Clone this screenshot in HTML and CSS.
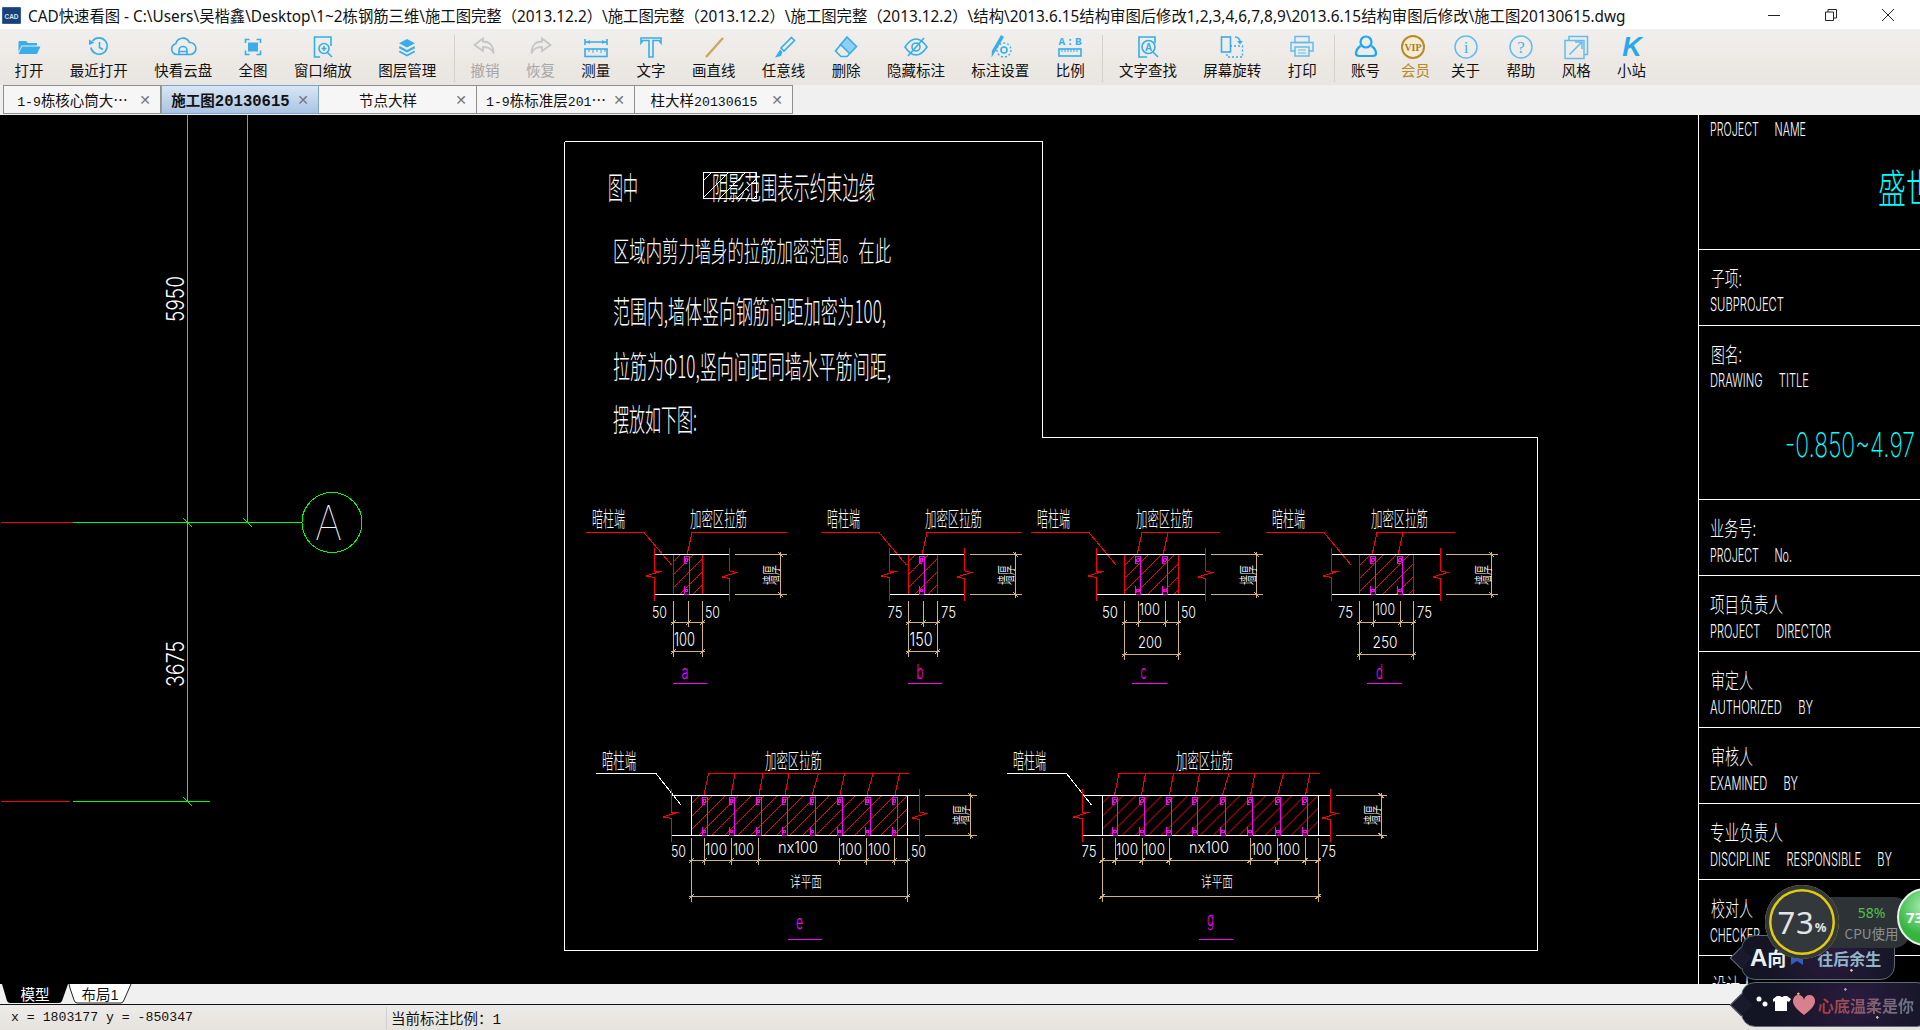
FILE: index.html
```html
<!DOCTYPE html>
<html lang="zh">
<head>
<meta charset="utf-8">
<title>CAD快速看图</title>
<link rel="stylesheet" href="styles.css">
</head>
<body>
<header class="titlebar">
  <svg class="appicon" viewBox="0 0 19 17"><rect width="19" height="17" rx="1" fill="#2b5f9e"/><rect x="1" y="1" width="17" height="15" fill="#1d3f73"/><text x="9.5" y="11.5" class="appicon-text" textLength="14" lengthAdjust="spacingAndGlyphs">CAD</text></svg>
  <span class="title-text">CAD快速看图 - C:\Users\吴楷鑫\Desktop\1~2栋钢筋三维\施工图完整（2013.12.2）\施工图完整（2013.12.2）\施工图完整（2013.12.2）\结构\2013.6.15结构审图后修改1,2,3,4,6,7,8,9\2013.6.15结构审图后修改\施工图20130615.dwg</span>
  <div class="winctl">
    <svg class="win-btn" viewBox="0 0 12 12"><path d="M0 6.5H12"/></svg>
    <svg class="win-btn win-max" viewBox="0 0 12 12"><path d="M0.5 3H8.5V11.5H0.5ZM3 3V0.5H11.5V9H8.5"/></svg>
    <svg class="win-btn win-close" viewBox="0 0 12 12"><path d="M0 0L12 12M12 0L0 12"/></svg>
  </div>
</header>

<nav class="toolbar">
  <div class="tool"><svg class="ico" viewBox="0 0 32 24"><path class="bf" d="M6 6h7l2 2h9v2.5H8.5L5.5 17V7z"/><path class="bf" d="M9 11.5h18.5L24 19H5.5z"/></svg><span>打开</span></div>
  <div class="tool"><svg class="ico" viewBox="0 0 32 24"><path class="bs" d="M9.5 6a8.2 8.2 0 1 1-1.6 6.5"/><path class="bf" d="M6 4.5l5.5 3.2L6 10z"/><path class="bs" d="M16.5 7v5.5l3.5 2"/></svg><span>最近打开</span></div>
  <div class="tool"><svg class="ico" viewBox="0 0 32 24"><path class="bs" d="M10 19.5a5.5 5.5 0 0 1-1.2-10.8a7.2 7.2 0 0 1 13.6-1.2a6 6 0 0 1 1 12z"/><path class="bs" d="M12 19.5v-4a4 4 0 0 1 8 0v4M12 16.5h8"/></svg><span>快看云盘</span></div>
  <div class="tool"><svg class="ico" viewBox="0 0 32 24"><path class="bs" d="M8.5 8V4.500h4M19.500 4.500h4V8M23.500 15.500v4h-4M12.500 19.500h-4v-4"/><rect class="bf" x="11" y="7.500" width="10" height="9"/></svg><span>全图</span></div>
  <div class="tool"><svg class="ico" viewBox="0 0 32 24"><path class="bs" d="M24 11V2H7.500v20H13"/><circle class="bs" cx="17" cy="13.500" r="5"/><path class="bs" d="M20.500 17.500L25 22M17 11v5M14.500 13.500h5"/></svg><span>窗口缩放</span></div>
  <div class="tool"><svg class="ico" viewBox="0 0 32 24"><path class="bf" d="M16 4l8 4.200-8 4.300-8-4.300z"/><path class="bf" d="M8.500 11l7.500 4 7.500-4 .5 2.300-8 4.200-8-4.200z"/><path class="bf" d="M8.500 15.500l7.500 4 7.500-4 .5 1.800-8 4.200-8-4.200z"/></svg><span>图层管理</span></div>
  <div class="tool-sep"></div>
  <div class="tool off"><svg class="ico" viewBox="0 0 32 24"><path class="gs" d="M14 3.500L5.500 10l8.500 6v-4c5 0 8.500 1 10.500 6.500c0-8-4-12-10.500-12z"/></svg><span>撤销</span></div>
  <div class="tool off"><svg class="ico" viewBox="0 0 32 24"><path class="gs" d="M18 3.500L26.500 10 18 16v-4c-5 0-8.500 1-10.500 6.500c0-8 4-12 10.500-12z"/></svg><span>恢复</span></div>
  <div class="tool"><svg class="ico" viewBox="0 0 32 24"><path class="bs" d="M5 4v6M27 4v6M5.500 7h21"/><path class="bf" d="M6 7l4-2v4zM26 7l-4-2v4z"/><rect class="bs" x="5" y="14" width="22" height="7.500"/><path class="bs thin" d="M9 14v3M13 14v4M17 14v3M21 14v4M25 14v3"/></svg><span>测量</span></div>
  <div class="tool"><svg class="ico" viewBox="0 0 32 24"><path class="bs" d="M6 3h20v5l-2-2.500h-6V22h-4V5.500H8L6 8z"/></svg><span>文字</span></div>
  <div class="tool wide"><svg class="ico" viewBox="0 0 32 24"><path class="gold" d="M8 22L25 3"/></svg><span>画直线</span></div>
  <div class="tool wide"><svg class="ico" viewBox="0 0 32 24"><path class="bs" d="M23.500 2.500l3 3L16 16l-3-3z"/><path class="bf" d="M12 14.500l2.500 2.500-1.500 4-6 1.500 2.500-4z"/></svg><span>任意线</span></div>
  <div class="tool"><svg class="ico" viewBox="0 0 32 24"><path class="lf" d="M17 2l9.500 9.500-7 7-9.500-9.500z"/><path class="bs" d="M17 2l9.500 9.500-9.500 10H11L5.500 16z"/><path class="bs" d="M10 9l9.500 9.500"/></svg><span>删除</span></div>
  <div class="tool"><svg class="ico" viewBox="0 0 32 24"><path class="bs" d="M5 12c4-6 7.500-8 11-8s7 2 11 8c-4 6-7.500 8-11 8s-7-2-11-8z"/><circle class="bs" cx="16" cy="12" r="4"/><path class="bs" d="M24 3L8 21"/></svg><span>隐藏标注</span></div>
  <div class="tool"><svg class="ico" viewBox="0 0 32 24"><path class="bf" d="M17 0l3 2-9 15-3.500 5.500.5-7z"/><circle class="bs" cx="20" cy="15" r="3"/><circle class="bs dash" cx="20" cy="15" r="7"/></svg><span>标注设置</span></div>
  <div class="tool"><svg class="ico" viewBox="0 0 32 24"><text x="16" y="10" class="ab" textLength="23" lengthAdjust="spacing">A:B</text><rect class="bs" x="5" y="14" width="22" height="7"/><path class="bs thin" d="M8 14v3M11 14v3M14 14v3M17 14v3M20 14v3M23 14v3"/></svg><span>比例</span></div>
  <div class="tool-sep"></div>
  <div class="tool"><svg class="ico" viewBox="0 0 32 24"><path class="bs" d="M23 8V2H7v20h8"/><circle class="bs" cx="16.500" cy="12" r="6.500"/><text x="16.500" y="15.500" class="ia">A</text><path class="bs" d="M21 17l5 5"/></svg><span>文字查找</span></div>
  <div class="tool"><svg class="ico" viewBox="0 0 32 24"><rect class="bs" x="5.500" y="2" width="9" height="15"/><path class="bs dash" d="M14 11h12.500v11H11v-5"/><path class="bs" d="M19 2c3 0 5 2 5.500 6"/><path class="bf" d="M21 6h6l-3 3.500z"/></svg><span>屏幕旋转</span></div>
  <div class="tool"><svg class="ico" viewBox="0 0 32 24"><rect class="ls" x="9" y="1.500" width="14" height="6"/><path class="ls" d="M9 16H5V7.500h22V16h-4"/><rect class="ls" x="9" y="12" width="14" height="9"/><path class="ls thin" d="M12 15h8M12 18h8"/></svg><span>打印</span></div>
  <div class="tool-sep"></div>
  <div class="tool tight"><svg class="ico" viewBox="0 0 32 24"><circle class="bs strong" cx="16" cy="7" r="5.500"/><path class="bs strong" d="M10.500 11c-3 2-4.500 5-4.500 7.500c0 2 2 2.500 3.500 2.500h13c1.500 0 3.500-.5 3.500-2.500C26 16 24.500 13 21.500 11"/></svg><span>账号</span></div>
  <div class="tool tight vip"><svg class="ico" viewBox="0 0 32 24"><circle cx="13" cy="12" r="11" class="vip-ring"/><text x="13" y="15.500" class="vip-text" textLength="17" lengthAdjust="spacingAndGlyphs">VIP</text></svg><span>会员</span></div>
  <div class="tool"><svg class="ico" viewBox="0 0 32 24"><circle cx="16" cy="12" r="11" class="ls"/><text x="16" y="18" class="ci">i</text></svg><span>关于</span></div>
  <div class="tool"><svg class="ico" viewBox="0 0 32 24"><circle cx="16" cy="12" r="11" class="ls"/><text x="16" y="18" class="ci">?</text></svg><span>帮助</span></div>
  <div class="tool"><svg class="ico" viewBox="0 0 32 24"><path class="ls" d="M9 5.500V1.500h18.500v18H24"/><rect class="ls" x="5" y="5.500" width="19" height="18"/><path class="ls" d="M9.500 19.500L22 7M15 7h7v7"/></svg><span>风格</span></div>
  <div class="tool"><svg class="ico" viewBox="0 0 32 24"><text x="16" y="21" class="kk">K</text></svg><span>小站</span></div>
</nav>

<div class="tabs">
  <div class="tab"><span class="tab-label"><span class="num">1-9</span>栋核心筒大…</span><span class="tab-x">✕</span></div>
  <div class="tab active"><span class="tab-label">施工图<span class="num">20130615</span></span><span class="tab-x">✕</span></div>
  <div class="tab"><span class="tab-label">节点大样</span><span class="tab-x">✕</span></div>
  <div class="tab"><span class="tab-label"><span class="num">1-9</span>栋标准层<span class="num">201</span>…</span><span class="tab-x">✕</span></div>
  <div class="tab"><span class="tab-label">柱大样<span class="num">20130615</span></span><span class="tab-x">✕</span></div>
</div>

<main class="canvas">
<svg class="drawing" viewBox="0 115 1920 869" width="1920" height="869" xmlns="http://www.w3.org/2000/svg">
  <defs>
    <pattern id="hatch" patternUnits="userSpaceOnUse" width="13" height="13"><path d="M-1 14L14 -1" class="r"/></pattern>
    <pattern id="whatch" patternUnits="userSpaceOnUse" width="17" height="17"><path d="M-1 18L18 -1" class="w"/></pattern>
    <g id="st" class="m">
      <path d="M5.500 0V38M0.500 0H5.500M0.500 0V7H3M0.500 38H5.500M0.500 30V38"/>
      <circle cx="3" cy="4" r="1.500"/><circle cx="3" cy="34.500" r="1.500"/>
    </g>
    <g id="brkL" class="r"><path d="M0.500 -6V17H8L-8 22L0.500 23.500V47"/></g>
    <g id="brkR" class="r"><path d="M0.500 -6V17L7.500 18.500L-7 23L0.500 24.500V47"/></g>
    <g id="dimR" class="t">
      <path d="M0 0H51.500M0 40H51.500M45.500 -3V43M43 -2.500L48 2.500M43 37.500L48 42.500"/>
    </g>
    <g id="d1">
      <path class="r" d="M586 532.500H644L671.500 565M787 532.500H692L687 555"/>
      <rect x="673.500" y="554.500" width="29" height="40" fill="url(#hatch)"/>
      <path class="r" d="M673.500 554V594M702.500 554V594"/>
      <path class="w" d="M654 554.500H729M654 594.500H729"/>
      <use href="#brkL" x="654" y="554"/><use href="#brkR" x="729" y="554"/>
      <use href="#st" x="683.500" y="556"/>
      <use href="#dimR" x="735" y="554.500"/>
      <path class="t" d="M673.500 601V657M688.500 601V627M702.500 601V657M671 622.500H705M671 651.500H705M671 625L676 620M686 625L691 620M700 625L705 620M671 654L676 649M700 654L705 649"/>
    </g>
    <g id="d2">
      <path class="r" d="M1031 532.500H1089L1116 565M1220 532.500H1142L1137 555M1168 532.500L1163 555"/>
      <rect x="1124.500" y="554.500" width="54" height="40" fill="url(#hatch)"/>
      <path class="r" d="M1124.500 554V594M1178.500 554V594"/>
      <path class="w" d="M1096 554.500H1205M1096 594.500H1205"/>
      <use href="#brkL" x="1096" y="554"/><use href="#brkR" x="1205" y="554"/>
      <use href="#st" x="1135" y="556"/><use href="#st" x="1162" y="556"/>
      <use href="#dimR" x="1211" y="554.500"/>
      <path class="t" d="M1124.500 601V660M1138.500 601V627M1165.500 601V627M1178.500 601V660M1122 622.500H1181M1122 654.500H1181M1122 625L1127 620M1136 625L1141 620M1163 625L1168 620M1176 625L1181 620M1122 657L1127 652M1176 657L1181 652"/>
    </g>
    <g id="d3">
      <path class="w" d="M596 773.500H656L681 805"/>
      <path class="r" d="M909 773.500H708.500L704 795M735 773.500L731 795M763 773.500L759 795M789 773.500L785 795M818.500 773.500L812 795M844.500 773.500L840 795M873 773.500L867 795M899.500 773.500L895 795"/>
      <rect x="691.500" y="795.500" width="216" height="40" fill="url(#hatch)"/>
      <path class="w" d="M691.500 795V835M907.500 795V835M671 795.500H920M671 835.500H920"/>
      <use href="#brkL" x="671" y="795"/><use href="#brkR" x="919" y="795"/>
      <use href="#st" x="701.500" y="797"/><use href="#st" x="728.500" y="797"/><use href="#st" x="755.500" y="797"/><use href="#st" x="781.500" y="797"/><use href="#st" x="809.500" y="797"/><use href="#st" x="836.500" y="797"/><use href="#st" x="864.500" y="797"/><use href="#st" x="891.500" y="797"/>
      <use href="#dimR" x="925" y="795.500"/>
      <path class="t" d="M691.500 838V902M704.500 838V865M731.500 838V865M758.500 838V865M839.500 838V865M866.500 838V865M894.500 838V865M907.500 838V902M689 860.500H910M689 896.500H910M689 863L694 858M702 863L707 858M729 863L734 858M756 863L761 858M837 863L842 858M864 863L869 858M892 863L897 858M905 863L910 858M689 899L694 894M905 899L910 894"/>
    </g>
  </defs>

  <!-- axis grid -->
  <g class="g">
    <path d="M187.500 115V801M247.500 115V522M73 522.500H302M73 801.500H210M183 518L192 527M243 518L252 527M183 797L192 806"/>
    <circle cx="332" cy="522.500" r="30"/>
  </g>
  <path class="r" d="M1 522.500H73M1 801.500H70"/>
  <text class="cad-thin" x="315" y="540" textLength="27" lengthAdjust="spacingAndGlyphs" font-size="48">A</text>
  <text class="la" transform="translate(184,322) rotate(-90)" font-size="23.500" textLength="46" lengthAdjust="spacingAndGlyphs">5950</text>
  <text class="la" transform="translate(184,687) rotate(-90)" font-size="23.500" textLength="46" lengthAdjust="spacingAndGlyphs">3675</text>

  <!-- sheet frame -->
  <path class="w" d="M565 141.500H1042.500V437.500H1537.500V950.500H564.500V141.500"/>

  <!-- note -->
  <rect x="703.500" y="172.500" width="53" height="26" fill="url(#whatch)"/>
  <rect x="703.500" y="172.500" width="53" height="26" class="w"/>
  <text class="cn" x="608" y="199" font-size="31" textLength="30" lengthAdjust="spacingAndGlyphs">图中</text>
  <text class="cn" x="712" y="199" font-size="31" textLength="163" lengthAdjust="spacingAndGlyphs">阴影范围表示约束边缘</text>
  <text class="cn" x="613" y="262" font-size="28" textLength="278" lengthAdjust="spacingAndGlyphs">区域内剪力墙身的拉筋加密范围。在此</text>
  <text class="cn" x="613" y="323" font-size="31" textLength="273" lengthAdjust="spacingAndGlyphs">范围内,墙体竖向钢筋间距加密为100,</text>
  <text class="cn" x="613" y="378" font-size="31" textLength="278" lengthAdjust="spacingAndGlyphs">拉筋为Φ10,竖向间距同墙水平筋间距,</text>
  <text class="cn" x="613" y="431" font-size="31" textLength="84" lengthAdjust="spacingAndGlyphs">摆放如下图:</text>

  <!-- details -->
  <use href="#d1"/><use href="#d1" x="235"/><use href="#d2"/><use href="#d2" x="235"/><use href="#d3"/><use href="#d3" x="410.500"/>

  <text class="cn" x="592" y="526" font-size="21" textLength="33" lengthAdjust="spacingAndGlyphs">暗柱端</text>
  <text class="cn" x="690" y="526" font-size="21" textLength="57" lengthAdjust="spacingAndGlyphs">加密区拉筋</text>
  <text class="cn" transform="translate(778,585) rotate(-90)" font-size="18.500" textLength="20" lengthAdjust="spacingAndGlyphs">墙厚</text>
  <text class="la" x="652" y="617.500" font-size="15.500" textLength="15" lengthAdjust="spacingAndGlyphs">50</text>
  <text class="la" x="705" y="617.500" font-size="15.500" textLength="15" lengthAdjust="spacingAndGlyphs">50</text>
  <text class="la" x="674" y="646" font-size="18" textLength="21" lengthAdjust="spacingAndGlyphs">100</text>
  <text class="lm" x="681.500" y="679" font-size="20" textLength="7" lengthAdjust="spacingAndGlyphs">a</text>
  <path class="m" d="M673 683.500H707"/>

  <text class="cn" x="827" y="526" font-size="21" textLength="33" lengthAdjust="spacingAndGlyphs">暗柱端</text>
  <text class="cn" x="925" y="526" font-size="21" textLength="57" lengthAdjust="spacingAndGlyphs">加密区拉筋</text>
  <text class="cn" transform="translate(1013,585) rotate(-90)" font-size="18.500" textLength="20" lengthAdjust="spacingAndGlyphs">墙厚</text>
  <text class="la" x="887.500" y="617.500" font-size="15.500" textLength="15" lengthAdjust="spacingAndGlyphs">75</text>
  <text class="la" x="941" y="617.500" font-size="15.500" textLength="15" lengthAdjust="spacingAndGlyphs">75</text>
  <text class="la" x="909.500" y="646" font-size="18" textLength="23" lengthAdjust="spacingAndGlyphs">150</text>
  <text class="lm" x="916.500" y="679" font-size="20" textLength="7" lengthAdjust="spacingAndGlyphs">b</text>
  <path class="m" d="M908 683.500H942"/>

  <text class="cn" x="1037" y="526" font-size="21" textLength="33" lengthAdjust="spacingAndGlyphs">暗柱端</text>
  <text class="cn" x="1136" y="526" font-size="21" textLength="57" lengthAdjust="spacingAndGlyphs">加密区拉筋</text>
  <text class="cn" transform="translate(1255,585) rotate(-90)" font-size="18.500" textLength="20" lengthAdjust="spacingAndGlyphs">墙厚</text>
  <text class="la" x="1102" y="617.500" font-size="15.500" textLength="16" lengthAdjust="spacingAndGlyphs">50</text>
  <text class="la" x="1139" y="615" font-size="15.500" textLength="21" lengthAdjust="spacingAndGlyphs">100</text>
  <text class="la" x="1181" y="617.500" font-size="15.500" textLength="15" lengthAdjust="spacingAndGlyphs">50</text>
  <text class="la" x="1138" y="648" font-size="15.500" textLength="24" lengthAdjust="spacingAndGlyphs">200</text>
  <text class="lm" x="1140.500" y="679" font-size="20" textLength="6" lengthAdjust="spacingAndGlyphs">c</text>
  <path class="m" d="M1132 683.500H1167"/>

  <text class="cn" x="1272" y="526" font-size="21" textLength="33" lengthAdjust="spacingAndGlyphs">暗柱端</text>
  <text class="cn" x="1371" y="526" font-size="21" textLength="57" lengthAdjust="spacingAndGlyphs">加密区拉筋</text>
  <text class="cn" transform="translate(1490,585) rotate(-90)" font-size="18.500" textLength="20" lengthAdjust="spacingAndGlyphs">墙厚</text>
  <text class="la" x="1338" y="617.500" font-size="15.500" textLength="15" lengthAdjust="spacingAndGlyphs">75</text>
  <text class="la" x="1375" y="615" font-size="15.500" textLength="20" lengthAdjust="spacingAndGlyphs">100</text>
  <text class="la" x="1417" y="617.500" font-size="15.500" textLength="15" lengthAdjust="spacingAndGlyphs">75</text>
  <text class="la" x="1372.500" y="648" font-size="15.500" textLength="25" lengthAdjust="spacingAndGlyphs">250</text>
  <text class="lm" x="1376" y="679" font-size="20" textLength="7" lengthAdjust="spacingAndGlyphs">d</text>
  <path class="m" d="M1367 683.500H1402"/>

  <text class="cn" x="602" y="768" font-size="21" textLength="34" lengthAdjust="spacingAndGlyphs">暗柱端</text>
  <text class="cn" x="765" y="768" font-size="21" textLength="57" lengthAdjust="spacingAndGlyphs">加密区拉筋</text>
  <text class="cn" transform="translate(968,825) rotate(-90)" font-size="18.500" textLength="20" lengthAdjust="spacingAndGlyphs">墙厚</text>
  <text class="la" x="671" y="857" font-size="15.500" textLength="15" lengthAdjust="spacingAndGlyphs">50</text>
  <text class="la" x="705" y="855" font-size="16.500" textLength="22" lengthAdjust="spacingAndGlyphs">100</text>
  <text class="la" x="733" y="855" font-size="16.500" textLength="21" lengthAdjust="spacingAndGlyphs">100</text>
  <text class="la" x="778" y="853" font-size="16.500" textLength="40" lengthAdjust="spacingAndGlyphs">nx100</text>
  <text class="la" x="840" y="855" font-size="16.500" textLength="22" lengthAdjust="spacingAndGlyphs">100</text>
  <text class="la" x="868" y="855" font-size="16.500" textLength="22" lengthAdjust="spacingAndGlyphs">100</text>
  <text class="la" x="911" y="857" font-size="15.500" textLength="15" lengthAdjust="spacingAndGlyphs">50</text>
  <text class="cn" x="790" y="887" font-size="15" textLength="32" lengthAdjust="spacingAndGlyphs">详平面</text>
  <text class="lm" x="796" y="929" font-size="20" textLength="7" lengthAdjust="spacingAndGlyphs">e</text>
  <path class="m" d="M788 939.500H822"/>

  <text class="cn" x="1013" y="768" font-size="21" textLength="33" lengthAdjust="spacingAndGlyphs">暗柱端</text>
  <text class="cn" x="1176" y="768" font-size="21" textLength="57" lengthAdjust="spacingAndGlyphs">加密区拉筋</text>
  <text class="cn" transform="translate(1379,825) rotate(-90)" font-size="18.500" textLength="20" lengthAdjust="spacingAndGlyphs">墙厚</text>
  <text class="la" x="1081.500" y="857" font-size="15.500" textLength="15" lengthAdjust="spacingAndGlyphs">75</text>
  <text class="la" x="1116" y="855" font-size="16.500" textLength="22" lengthAdjust="spacingAndGlyphs">100</text>
  <text class="la" x="1143" y="855" font-size="16.500" textLength="22" lengthAdjust="spacingAndGlyphs">100</text>
  <text class="la" x="1189" y="853" font-size="16.500" textLength="40" lengthAdjust="spacingAndGlyphs">nx100</text>
  <text class="la" x="1251" y="855" font-size="16.500" textLength="21" lengthAdjust="spacingAndGlyphs">100</text>
  <text class="la" x="1278" y="855" font-size="16.500" textLength="22" lengthAdjust="spacingAndGlyphs">100</text>
  <text class="la" x="1321" y="857" font-size="15.500" textLength="15" lengthAdjust="spacingAndGlyphs">75</text>
  <text class="cn" x="1201" y="887" font-size="15" textLength="32" lengthAdjust="spacingAndGlyphs">详平面</text>
  <text class="lm" x="1207" y="926" font-size="20" textLength="7" lengthAdjust="spacingAndGlyphs">g</text>
  <path class="m" d="M1199 939.500H1233"/>

  <!-- title block -->
  <path class="w" d="M1698.500 115V984M1699 249.500H1920M1699 325.500H1920M1699 499.500H1920M1699 575.500H1920M1699 651.500H1920M1699 727.500H1920M1699 803.500H1920M1699 879.500H1920M1699 955.500H1920"/>
  <text class="la wide-gap" x="1710" y="136" font-size="18" textLength="96" lengthAdjust="spacingAndGlyphs">PROJECT  NAME</text>
  <text class="cnc" x="1878" y="203" font-size="40" textLength="56" lengthAdjust="spacingAndGlyphs">盛世</text>
  <text class="cn" x="1711" y="286" font-size="21" textLength="31" lengthAdjust="spacingAndGlyphs">子项:</text>
  <text class="la" x="1710" y="311" font-size="18" textLength="74" lengthAdjust="spacingAndGlyphs">SUBPROJECT</text>
  <text class="cn" x="1711" y="362" font-size="21" textLength="31" lengthAdjust="spacingAndGlyphs">图名:</text>
  <text class="la wide-gap" x="1710" y="387" font-size="18" textLength="99" lengthAdjust="spacingAndGlyphs">DRAWING  TITLE</text>
  <text class="lc" x="1785" y="457" font-size="34" textLength="130" lengthAdjust="spacingAndGlyphs">-0.850~4.97</text>
  <text class="cn" x="1710" y="536" font-size="21" textLength="46" lengthAdjust="spacingAndGlyphs">业务号:</text>
  <text class="la wide-gap" x="1710" y="562" font-size="18" textLength="82" lengthAdjust="spacingAndGlyphs">PROJECT  No.</text>
  <text class="cn" x="1710" y="612" font-size="21" textLength="73" lengthAdjust="spacingAndGlyphs">项目负责人</text>
  <text class="la wide-gap" x="1710" y="638" font-size="18" textLength="121" lengthAdjust="spacingAndGlyphs">PROJECT  DIRECTOR</text>
  <text class="cn" x="1711" y="688" font-size="21" textLength="42" lengthAdjust="spacingAndGlyphs">审定人</text>
  <text class="la wide-gap" x="1710" y="714" font-size="18" textLength="103" lengthAdjust="spacingAndGlyphs">AUTHORIZED  BY</text>
  <text class="cn" x="1711" y="764" font-size="21" textLength="42" lengthAdjust="spacingAndGlyphs">审核人</text>
  <text class="la wide-gap" x="1710" y="790" font-size="18" textLength="88" lengthAdjust="spacingAndGlyphs">EXAMINED  BY</text>
  <text class="cn" x="1710" y="840" font-size="21" textLength="73" lengthAdjust="spacingAndGlyphs">专业负责人</text>
  <text class="la wide-gap" x="1710" y="866" font-size="18" textLength="182" lengthAdjust="spacingAndGlyphs">DISCIPLINE  RESPONSIBLE  BY</text>
  <text class="cn" x="1711" y="916" font-size="21" textLength="42" lengthAdjust="spacingAndGlyphs">校对人</text>
  <text class="la" x="1710" y="942" font-size="18" textLength="50" lengthAdjust="spacingAndGlyphs">CHECKER</text>
  <text class="cn" x="1712" y="993" font-size="21" textLength="42" lengthAdjust="spacingAndGlyphs">设计人</text>
</svg>
</main>

<div class="layouts">
  <div class="ltab ltab-dark"><svg class="ltab-bg" viewBox="0 0 66 20"><path d="M0 0L5 17Q6 19 8 19H57Q59 19 60 17L66 0z"/></svg><span>模型</span></div>
  <div class="ltab ltab-light"><svg class="ltab-bg" viewBox="0 0 66 20"><path d="M2 0Q2 0 3 4L7 16Q8 19 10 19H54Q56 19 57 16L64 0"/></svg><span>布局<span class="ltab-num">1</span></span></div>
</div>

<footer class="status">
  <div class="coord">x = 1803177 y = -850347</div>
  <div class="scale">当前标注比例：<span class="status-num">1</span></div>
</footer>

<aside class="chip chip-top">
  <span class="chip-a">A</span><span class="chip-a2">向</span>
  <svg class="chip-flag" viewBox="0 0 12 14"><path d="M0 0H12V14L6 10L0 14z"/></svg>
  <span class="chip-name">往后余生</span>
</aside>
<aside class="chip chip-bottom">
  <svg class="chip-deco" viewBox="0 0 62 24"><circle cx="5" cy="6" r="2.500"/><circle cx="11" cy="11" r="2.500"/><path d="M19 6l4-3h3q2 2 4 0h3l4 3-2 3-2-1v10H21V8l-2 1z"/><path class="chip-heart" d="M50 22C42 16 39 12 39 8a5.500 5.500 0 0 1 11-1a5.500 5.500 0 0 1 11 1c0 4-3 8-11 14z"/></svg>
  <span class="chip-love">心底温柔是你</span>
</aside>
<aside class="cpu">
  <div class="cpu-pill"><span class="cpu-pct">58%</span><span class="cpu-lbl">CPU使用</span></div>
  <div class="cpu-dial"><span class="cpu-val">73</span><span class="cpu-unit">%</span></div>
  <div class="cpu-ball">73</div>
</aside>
</body>
</html>
```
FILE: styles.css
```css
* { box-sizing: border-box; }
html, body { margin: 0; padding: 0; }
body {
  position: relative;
  width: 1920px;
  height: 1030px;
  overflow: hidden;
  display: flex;
  flex-direction: column;
  background: #f0f0f0;
  font-family: "Noto Sans CJK SC", sans-serif;
  color: #111;
}

/* title bar */
.titlebar {
  flex: 0 0 29px;
  display: flex;
  align-items: center;
  background: #fff;
  padding-left: 2px;
}
.appicon { width: 19px; height: 17px; margin-right: 7px; margin-top: 2px; }
.appicon-text { font: bold 7px "Liberation Sans", sans-serif; fill: #cfe2f5; text-anchor: middle; }
.title-text {
  font-family: "Noto Sans", "Noto Sans CJK SC", sans-serif;
  font-size: 15.35px;
  white-space: nowrap;
  flex: 1;
  color: #111;
}
.winctl { display: flex; align-items: center; padding-right: 26px; gap: 45px; }
.win-btn { width: 12px; height: 12px; fill: none; stroke: #222; stroke-width: 1; }

/* tool bar */
.toolbar {
  flex: 0 0 56px;
  display: flex;
  align-items: flex-start;
  padding-left: 14.5px;
  padding-top: 6px;
  background: linear-gradient(#f1efed, #e9e5e0);
}
.tool {
  display: flex;
  flex-direction: column;
  align-items: center;
  margin-right: 26.35px;
  font-size: 14.5px;
  line-height: 21px;
  white-space: nowrap;
  color: #111;
}
.tool.off { color: #a6a6a6; }
.tool.tight { margin-right: 21px; }
.tool.vip { color: #b98a2a; }
.tool-sep {
  width: 1px;
  height: 47px;
  margin: 0 16px 0 -9px;
  background: #d4d1cd;
}
.ico { width: 32px; height: 24px; margin: 0 -2px; display: block; overflow: visible; }
.bs { fill: none; stroke: #35aeea; stroke-width: 1.6; }
.bs.thin, .ls.thin { stroke-width: 1; }
.bs.strong { stroke-width: 2.2; stroke: #1ea7f0; }
.bs.dash { stroke-dasharray: 2 2; stroke-width: 1.3; }
.bf { fill: #3aaeea; }
.lf { fill: #8ed0f2; }
.ls { fill: none; stroke: #62bdec; stroke-width: 1.5; }
.gs { fill: none; stroke: #c6c6c6; stroke-width: 1.8; }
.gold { fill: none; stroke: #c9a95c; stroke-width: 2.4; }
.ab { font: bold 11px "Liberation Mono", monospace; fill: #35aeea; text-anchor: middle; }
.ia { font: bold 10px "Liberation Sans", sans-serif; fill: #35aeea; text-anchor: middle; }
.ci { font: 17px "Liberation Serif", serif; fill: #4ab3e8; text-anchor: middle; }
.kk { font: italic bold 27px "Liberation Sans", sans-serif; fill: #27a9ec; text-anchor: middle; }
.vip-ring { fill: #f6ecd4; stroke: #b98a2a; stroke-width: 2; }
.vip-text { font: bold 10px "Liberation Serif", serif; fill: #a87a1e; text-anchor: middle; }

/* document tabs */
.tabs {
  flex: 0 0 30px;
  display: flex;
  padding-left: 3px;
  background: #f0f0f0;
}
.tab {
  width: 158px;
  height: 29px;
  display: flex;
  align-items: center;
  padding-left: 3px;
  padding-right: 8px;
  background: #f6f6f6;
  border: 1px solid #8f8f8f;
  border-left-width: 0;
  font-size: 14.5px;
  white-space: nowrap;
}
.tab:first-child { border-left-width: 1px; }
.tab-label { flex: 1; text-align: center; overflow: hidden; }
.tab-x { width: 14px; text-align: center; font-size: 14px; color: #777; font-family: "DejaVu Sans", sans-serif; font-weight: 400; }
.num { font-family: "Liberation Mono", monospace; font-size: 13.2px; }
.tab.active {
  background: linear-gradient(#d9e6f4, #a9c4e2);
  border: 1px solid #7da2cc;
  font-weight: 700;
}
.tab.active .num { font-size: 15.6px; font-weight: 700; }

/* drawing */
.canvas { flex: 1 1 auto; min-height: 0; background: #000; overflow: hidden; }
.drawing { display: block; shape-rendering: crispEdges; }
.w { fill: none; stroke: #fff; stroke-width: 1; }
.r { fill: none; stroke: #f00; stroke-width: 1; }
.g { fill: none; stroke: #0f0; stroke-width: 1; }
.m { fill: none; stroke: #f0f; stroke-width: 1; }
.t { fill: none; stroke: #d2b473; stroke-width: 1; }
.cn, .cnc { font-family: "Noto Sans CJK SC", sans-serif; font-weight: 300; fill: #fff; white-space: pre; }
.cnc { fill: #0ff; }
.la, .lc, .lm { font-family: "Inter", sans-serif; font-weight: 300; fill: #fff; white-space: pre; }
.wide-gap { word-spacing: 8px; }
.lc { fill: #0ff; font-weight: 200; }
.lm { fill: #f0f; }
.cad-thin { font-family: "Inter", sans-serif; font-weight: 100; fill: #fff; }

/* model / layout tabs */
.layouts {
  flex: 0 0 21px;
  display: flex;
  padding-left: 2px;
  background: #f0f0f0;
  border-bottom: 1px solid #111;
  font-size: 14.5px;
}
.ltab {
  position: relative;
  width: 66px;
  height: 20px;
  display: flex;
  justify-content: center;
  align-items: center;
  line-height: 20px;
}
.ltab span { position: relative; }
.ltab-bg { position: absolute; inset: 0; width: 66px; height: 20px; }
.ltab-dark { color: #fff; }
.ltab-dark .ltab-bg { fill: #000; }
.ltab-light { margin-left: -1px; color: #111; }
.ltab-light .ltab-bg { fill: #fff; stroke: #222; stroke-width: 1; }
.ltab-num { font-family: "Liberation Sans", sans-serif; }

/* status bar */
.status {
  flex: 0 0 25px;
  display: flex;
  align-items: center;
  background: linear-gradient(#edebe8, #e6e3de);
  font-size: 14.5px;
}
.coord {
  width: 386px;
  padding-left: 11px;
  font-family: "Liberation Mono", monospace;
  font-size: 13.2px;
  white-space: pre;
}
.scale { border-left: 1px solid #cfcfcf; padding-left: 4px; height: 22px; line-height: 22px; }
.status-num { font-family: "Liberation Mono", monospace; }

/* floating widgets */
.chip {
  position: absolute;
  display: flex;
  align-items: center;
  border: 1px solid #5c6b72;
  border-radius: 14px;
  background:
    radial-gradient(circle at 30% 25%, #c9b56a 0 1px, transparent 1.500px),
    radial-gradient(circle at 72% 80%, #d8c878 0 1px, transparent 1.500px),
    radial-gradient(circle at 55% 15%, #a0a0c0 0 1px, transparent 1.500px),
    radial-gradient(circle at 60% 40%, #2a1b40, #141524 70%);
}
.chip::before {
  content: "";
  position: absolute;
  left: -9px;
  top: 50%;
  width: 15px;
  height: 15px;
  margin-top: -8px;
  transform: rotate(45deg);
  background: #1b1a2c;
  border-left: 1px solid #5c6b72;
  border-bottom: 1px solid #5c6b72;
}
.chip > * { position: relative; }
.chip-top { left: 1741px; top: 935px; width: 154px; height: 45px; padding-left: 8px; }
.chip-a { font: bold 24px "Liberation Sans", sans-serif; color: #eceff3; }
.chip-a2 { font-size: 19px; font-weight: 700; color: #eceff3; margin-right: 5px; }
.chip-flag { width: 12px; height: 14px; fill: #2f5fc4; margin-right: 14px; }
.chip-name { font-size: 16px; font-weight: 700; color: #8fb7c6; white-space: nowrap; }
.chip-bottom { left: 1741px; top: 982px; width: 190px; height: 45px; padding-left: 12px; }
.chip-deco { width: 62px; height: 24px; fill: #fff; flex: none; margin-right: 2px; }
.chip-heart { fill: #d9808c; }
.chip-love {
  font-size: 16px;
  font-weight: 700;
  white-space: nowrap;
  color: transparent;
  background: linear-gradient(90deg, #b03a3a, #8a5a66 45%, #66788a);
  -webkit-background-clip: text;
  background-clip: text;
}
.cpu { position: absolute; left: 1765px; top: 885px; width: 190px; height: 75px; }
.cpu-pill {
  position: absolute;
  left: 35px;
  top: 12px;
  width: 110px;
  height: 51px;
  padding-left: 33px;
  display: flex;
  flex-direction: column;
  align-items: center;
  border-radius: 16px;
  background: #2d3237;
  line-height: 20px;
}
.cpu-pct { font: 14px "Noto Sans", sans-serif; color: #52c04c; margin-top: 6px; }
.cpu-lbl { font-size: 13.5px; color: #8b8f92; white-space: nowrap; margin-top: 1px; }
.cpu-dial {
  position: absolute;
  left: 0;
  top: 0;
  width: 74px;
  height: 74px;
  display: flex;
  align-items: center;
  justify-content: center;
  border-radius: 50%;
  background: #33383d;
  box-shadow: inset 0 0 0 4px #33383d, inset 0 0 0 6.500px #e2cc0c;
  color: #e4e4e4;
}
.cpu-val { font: 31px "Noto Sans", sans-serif; letter-spacing: 1px; }
.cpu-unit { font: bold 13px "Noto Sans", sans-serif; margin-top: 9px; }
.cpu-ball {
  position: absolute;
  left: 132px;
  top: 3px;
  width: 58px;
  height: 58px;
  padding-left: 7px;
  border-radius: 50%;
  background: radial-gradient(circle at 45% 30%, #a4ecb0, #34b53f 60%);
  border: 2px solid #e8f4ea;
  font: bold 15px/54px "Noto Sans", sans-serif;
  color: #fff;
}
```
